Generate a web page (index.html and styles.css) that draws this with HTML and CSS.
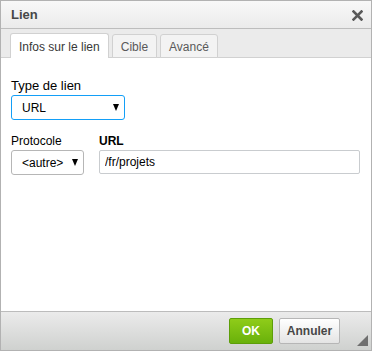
FILE: index.html
```html
<html>
    <head>
        <link rel="stylesheet" href="styles.css">
    </head>
    <body>
        <div class="dialog">
            <div class="title">
                <span>Lien</span>
                <a class="close" href="#">
                    <svg width="11" height="11" viewBox="0 0 11 11">
                        <path d="M1.5 1.5 L9.5 9.5 M9.5 1.5 L1.5 9.5" stroke="#5a5a5a" stroke-width="2.6" stroke-linecap="square"/>
                    </svg>
                </a>
            </div>
            <div class="tabs">
                <a class="tab active">Infos sur le lien</a>
                <a class="tab">Cible</a>
                <a class="tab">Avancé</a>
            </div>
            <div class="contents">
                <div class="field">
                    <label class="big">Type de lien</label>
                    <div class="select focused type-select">
                        <span>URL</span>
                        <span class="arrow"></span>
                    </div>
                </div>
                <div class="row">
                    <div class="field">
                        <label>Protocole</label>
                        <div class="select proto-select">
                            <span>&lt;autre&gt;</span>
                            <span class="arrow"></span>
                        </div>
                    </div>
                    <div class="field grow">
                        <label class="strong">URL</label>
                        <input class="text" type="text" value="/fr/projets">
                    </div>
                </div>
            </div>
            <div class="footer">
                <a class="btn ok" href="#">OK</a>
                <a class="btn cancel" href="#">Annuler</a>
                <span class="grip"></span>
            </div>
        </div>
    </body>
</html>
```

FILE: styles.css
```css
body {
    margin: 0;
    font-family: "Liberation Sans", Arial, sans-serif;
    font-size: 12px;
    color: #000;
}
.dialog {
    position: relative;
    width: 372px;
    height: 351px;
    box-sizing: border-box;
    border: 1px solid #b2b2b2;
    display: flex;
    flex-direction: column;
    background: #fff;
}
.title {
    height: 27px;
    border-bottom: 1px solid #bdbdbd;
    background: linear-gradient(to bottom, #f8f8f8, #ebebeb);
    display: flex;
    align-items: center;
    justify-content: space-between;
    padding: 0 8px 0 10px;
    font-size: 13px;
    font-weight: bold;
    color: #474747;
}
.close {
    display: flex;
    margin-top: 1px;
}
.tabs {
    height: 29px;
    box-sizing: border-box;
    background: #ebebeb;
    border-bottom: 1px solid #d1d1d1;
    display: flex;
    align-items: flex-end;
    padding-left: 9px;
    gap: 3px;
}
.tab {
    height: 24px;
    box-sizing: border-box;
    margin-bottom: -1px;
    padding: 5px 8px 0 8px;
    border: 1px solid #d1d1d1;
    border-radius: 3px 3px 0 0;
    background: #f3f3f3;
    color: #595959;
    font-size: 12px;
}
.tab.active {
    height: 25px;
    background: #fff;
    color: #383838;
    border-bottom: none;
    padding-top: 6px;
}
.contents {
    flex: 1;
    padding: 20px 10px 0 10px;
}
.field {
    display: flex;
    flex-direction: column;
    align-items: flex-start;
}
.field label {
    font-size: 12px;
    line-height: 16px;
    margin-bottom: 1px;
}
.field label.big {
    font-size: 13px;
}
.field label.strong {
    font-weight: bold;
}
.row {
    display: flex;
    gap: 15px;
    margin-top: 13px;
}
.grow {
    flex: 1;
    align-items: stretch;
    margin-right: 1px;
}
.select {
    height: 25px;
    box-sizing: border-box;
    border: 1px solid #b6b6b6;
    border-radius: 3px;
    display: flex;
    align-items: center;
    justify-content: space-between;
    padding: 0 4px 0 10px;
    font-size: 12px;
    background: #fff;
}
.select.focused {
    border-color: #139ff7;
}
.type-select {
    width: 114px;
}
.proto-select {
    width: 73px;
}
.arrow {
    width: 0;
    height: 0;
    border-left: 3.5px solid transparent;
    border-right: 3.5px solid transparent;
    border-top: 7px solid #000;
    margin-right: 1px;
}
.text {
    height: 24px;
    box-sizing: border-box;
    border: 1px solid #c9cccf;
    border-radius: 2px;
    padding: 0 5px;
    font-family: "Liberation Sans", Arial, sans-serif;
    font-size: 12px;
    color: #000;
}
.footer {
    height: 38px;
    border-top: 1px solid #bcbcbc;
    background: linear-gradient(to bottom, #ebebeb, #cfd1cf);
    display: flex;
    align-items: center;
    justify-content: flex-end;
    padding-right: 31px;
    gap: 6px;
}
.btn {
    height: 26px;
    box-sizing: border-box;
    border-radius: 2px;
    display: flex;
    align-items: center;
    justify-content: center;
    font-size: 12px;
    font-weight: bold;
    text-decoration: none;
}
.ok {
    width: 44px;
    color: #fff;
    border: 1px solid #5d9e09;
    background: linear-gradient(to bottom, #8fcc19, #69b10b);
}
.cancel {
    width: 61px;
    color: #474747;
    border: 1px solid #b6b6b6;
    background: linear-gradient(to bottom, #ffffff, #e4e4e4);
}
.grip {
    position: absolute;
    right: 3px;
    bottom: 4px;
    width: 0;
    height: 0;
    border-left: 11px solid transparent;
    border-bottom: 11px solid #6f6f6f;
}
```
